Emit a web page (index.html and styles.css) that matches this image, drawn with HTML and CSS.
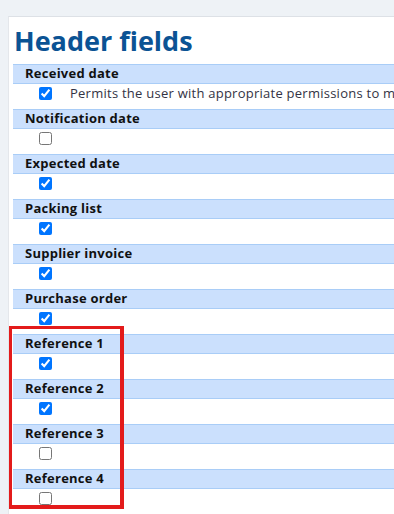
FILE: index.html
```html
<!DOCTYPE html>
<html>
<head>
<meta charset="utf-8">
<link rel="stylesheet" href="styles.css">
</head>
<body>
<div class="panel">
  <h1 class="title">Header fields</h1>
  <div class="fields">
    <div class="field-head">Received date</div>
    <div class="field-row"><input type="checkbox" checked><span class="desc">Permits the user with appropriate permissions to modify the received date</span></div>
    <div class="field-head">Notification date</div>
    <div class="field-row"><input type="checkbox"></div>
    <div class="field-head">Expected date</div>
    <div class="field-row"><input type="checkbox" checked></div>
    <div class="field-head">Packing list</div>
    <div class="field-row"><input type="checkbox" checked></div>
    <div class="field-head">Supplier invoice</div>
    <div class="field-row"><input type="checkbox" checked></div>
    <div class="field-head">Purchase order</div>
    <div class="field-row"><input type="checkbox" checked></div>
    <div class="field-head">Reference 1</div>
    <div class="field-row"><input type="checkbox" checked></div>
    <div class="field-head">Reference 2</div>
    <div class="field-row"><input type="checkbox" checked></div>
    <div class="field-head">Reference 3</div>
    <div class="field-row"><input type="checkbox"></div>
    <div class="field-head">Reference 4</div>
    <div class="field-row"><input type="checkbox"></div>
  </div>
</div>
<div class="highlight"></div>
</body>
</html>
```
FILE: styles.css
```css
html, body {
  margin: 0;
  padding: 0;
}
body {
  background: #eef2f6;
  overflow: hidden;
  width: 394px;
  height: 514px;
  position: relative;
  font-family: "Open Sans", "DejaVu Sans", sans-serif;
}
.panel {
  margin: 16px 0 0 8px;
  width: 700px;
  min-height: 600px;
  background: #ffffff;
  border-top: 1px solid #dde1e6;
  border-left: 1px solid #e4e7eb;
  padding: 0 0 0 4px;
}
.title {
  margin: 0;
  padding: 8px 0 7px 1px;
  font-size: 27px;
  line-height: 32px;
  font-weight: bold;
  color: #0b5394;
}
.fields {
  display: flex;
  flex-direction: column;
}
.field-head {
  height: 18px;
  line-height: 16px;
  background: #cbe0fd;
  border-top: 1px solid #a9cdf7;
  border-bottom: 1px solid #a9cdf7;
  padding-left: 12px;
  font-size: 13px;
  font-weight: bold;
  letter-spacing: 0.25px;
  color: #111111;
}
.field-row {
  height: 25px;
  display: flex;
  align-items: flex-start;
}
.field-row input {
  margin: 3px 0 0 26px;
  width: 13px;
  height: 13px;
}
.desc {
  margin-left: 18px;
  font-size: 13px;
  line-height: 18px;
  letter-spacing: 0.25px;
  color: #333344;
  white-space: nowrap;
}
.highlight {
  position: absolute;
  left: 9px;
  top: 326px;
  width: 108px;
  height: 176px;
  border-style: solid;
  border-color: #e31b1b;
  border-width: 3px 4px 4px 3px;
}
```
